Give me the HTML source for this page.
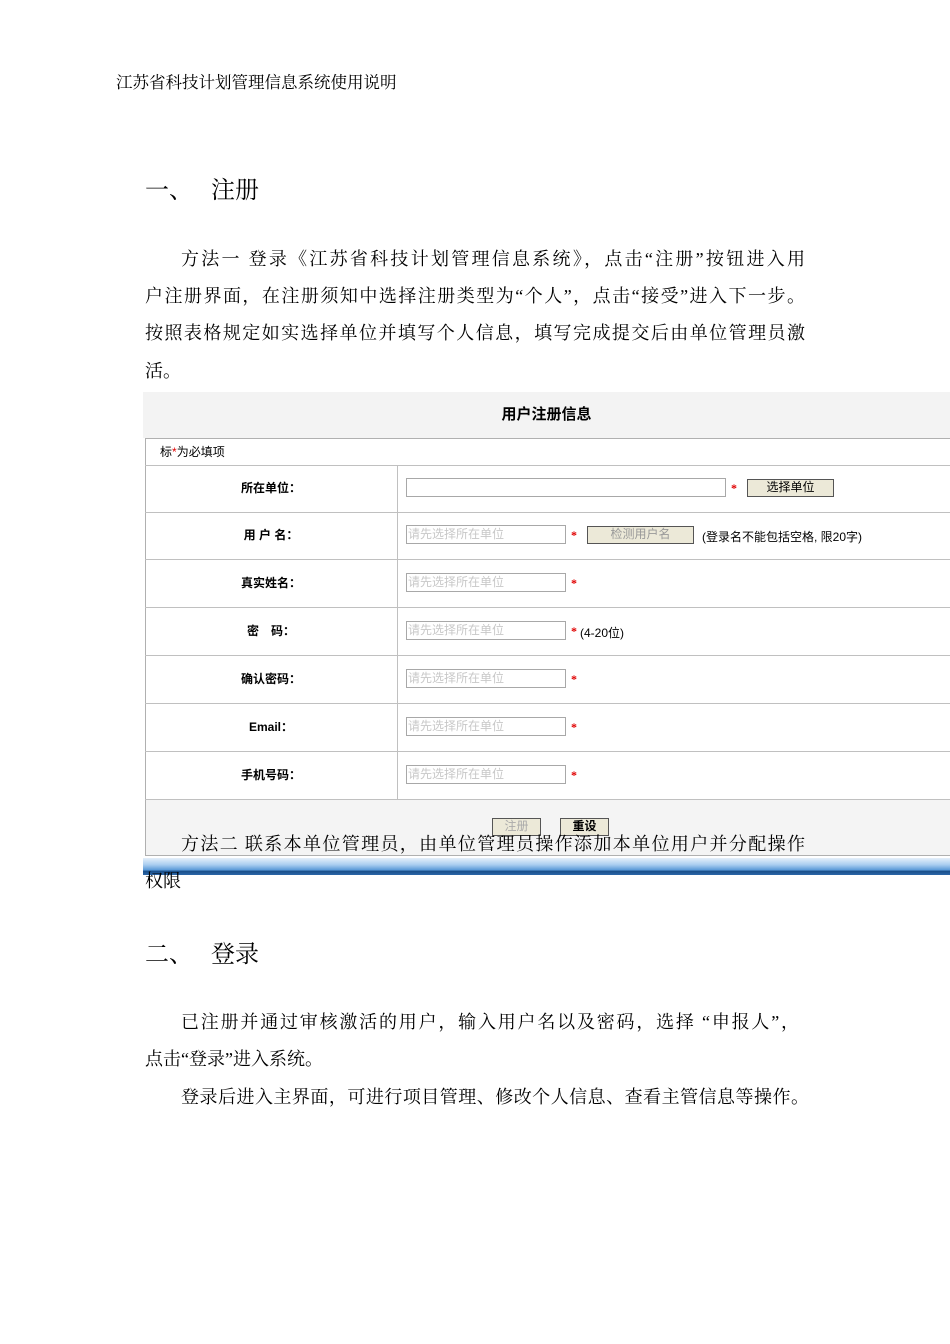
<!DOCTYPE html>
<html><head><meta charset="utf-8"><style>
body{margin:0;width:950px;height:1344px;background:#fff;position:relative;overflow:hidden;font-family:"Liberation Serif","Noto Serif CJK SC",serif;color:#000}
.a{position:absolute;white-space:nowrap}
.j{position:absolute;white-space:nowrap;text-align:justify;text-align-last:justify;font-size:18px;line-height:20px}
.s{font-family:"Liberation Sans","WenQuanYi Zen Hei","Noto Sans CJK SC",sans-serif;font-size:12px}
.hl{position:absolute;left:145px;width:805px;height:1px;background:#c0c0c0}
.lab{position:absolute;left:145px;width:252px;text-align:center;font-weight:bold}
.inp{position:absolute;left:406px;border:1px solid #a8a8a8;background:#fff;color:#c8c8c8;font-size:12px;line-height:17px;padding-left:1px;box-sizing:border-box;width:160px;height:19px}
.st{position:absolute;color:#e00000;font-size:12px;font-weight:bold}
.btn{position:absolute;background:#ece9d8;border:1px solid #555;box-sizing:border-box;text-align:center;font-size:12px;line-height:15px}
</style></head><body>
<div class="a" style="left:116px;top:69px;font-size:16.5px">江苏省科技计划管理信息系统使用说明</div>
<div class="a" style="left:145px;top:170px;font-size:24px">一、</div>
<div class="a" style="left:211px;top:170px;font-size:24px">注册</div>
<div class="j" style="left:181px;top:249px;width:624px">方法一 登录《江苏省科技计划管理信息系统》，点击“注册”按钮进入用</div>
<div class="j" style="left:145px;top:286px;width:660px">户注册界面，在注册须知中选择注册类型为“个人”，点击“接受”进入下一步。</div>
<div class="j" style="left:145px;top:323px;width:660px">按照表格规定如实选择单位并填写个人信息，填写完成提交后由单位管理员激</div>
<div class="a" style="left:145px;top:361px;font-size:18px;line-height:20px">活。</div>

<div class="a" style="left:143px;top:392px;width:807px;height:465px;background:#fff"></div>
<div class="a" style="left:143px;top:392px;width:807px;height:46px;background:#f3f3f3"></div>
<div class="a s" style="left:143px;top:403px;width:807px;text-align:center;font-size:15px;font-weight:bold">用户注册信息</div>
<div class="a" style="left:145px;top:438px;width:805px;height:418px;border-left:1px solid #b0b0b0;border-top:1px solid #b0b0b0;border-bottom:1px solid #b0b0b0;box-sizing:border-box"></div>
<div class="a" style="left:146px;top:800px;width:804px;height:55px;background:#f4f4f4"></div>
<div class="hl" style="top:465px"></div><div class="hl" style="top:512px"></div><div class="hl" style="top:559px"></div><div class="hl" style="top:607px"></div><div class="hl" style="top:655px"></div><div class="hl" style="top:703px"></div><div class="hl" style="top:751px"></div><div class="hl" style="top:799px"></div>
<div class="a" style="left:397px;top:465px;width:1px;height:334px;background:#c0c0c0"></div>
<div class="a s" style="left:160px;top:443px">标<span style="color:#e00000">*</span>为必填项</div>
<div class="lab s" style="top:479px">所在单位：</div>
<div class="lab s" style="top:526px">用 户 名：</div>
<div class="lab s" style="top:574px">真实姓名：</div>
<div class="lab s" style="top:622px">密　码：</div>
<div class="lab s" style="top:670px">确认密码：</div>
<div class="lab s" style="top:718px">Email：</div>
<div class="lab s" style="top:766px">手机号码：</div>
<div class="inp" style="top:478px;width:320px"></div>
<div class="st" style="left:731px;top:481px">*</div>
<div class="btn s" style="left:747px;top:479px;width:87px;height:18px">选择单位</div>
<div class="inp s" style="top:525px">请先选择所在单位</div>
<div class="st" style="left:571px;top:528px">*</div>
<div class="btn s" style="left:587px;top:526px;width:107px;height:18px;color:#999">检测用户名</div>
<div class="a s" style="left:702px;top:528px">(登录名不能包括空格, 限20字)</div>
<div class="inp s" style="top:573px">请先选择所在单位</div><div class="st" style="left:571px;top:576px">*</div>
<div class="inp s" style="top:621px">请先选择所在单位</div><div class="st" style="left:571px;top:624px">*</div>
<div class="a s" style="left:580px;top:624px">(4-20位)</div>
<div class="inp s" style="top:669px">请先选择所在单位</div><div class="st" style="left:571px;top:672px">*</div>
<div class="inp s" style="top:717px">请先选择所在单位</div><div class="st" style="left:571px;top:720px">*</div>
<div class="inp s" style="top:765px">请先选择所在单位</div><div class="st" style="left:571px;top:768px">*</div>
<div class="btn s" style="left:492px;top:818px;width:49px;height:18px;color:#aaa">注册</div>
<div class="btn s" style="left:560px;top:818px;width:49px;height:18px;font-weight:bold">重设</div>
<div class="a" style="left:143px;top:858px;width:807px;height:17px;background:linear-gradient(#e6f0fa,#a9cdf0 40%,#5b9ad8 70%,#1a4f8a 78%,#2b66a8)"></div>

<div class="j" style="left:181px;top:834px;width:624px">方法二 联系本单位管理员，由单位管理员操作添加本单位用户并分配操作</div>
<div class="a" style="left:145px;top:871px;font-size:18px;line-height:20px">权限</div>
<div class="a" style="left:145px;top:934px;font-size:24px">二、</div>
<div class="a" style="left:211px;top:934px;font-size:24px">登录</div>
<div class="j" style="left:181px;top:1012px;width:618px">已注册并通过审核激活的用户，输入用户名以及密码，选择 “申报人”，</div>
<div class="a" style="left:145px;top:1049px;font-size:18px;line-height:20px">点击“登录”进入系统。</div>
<div class="j" style="left:181px;top:1087px;width:628px">登录后进入主界面，可进行项目管理、修改个人信息、查看主管信息等操作。</div>
</body></html>
